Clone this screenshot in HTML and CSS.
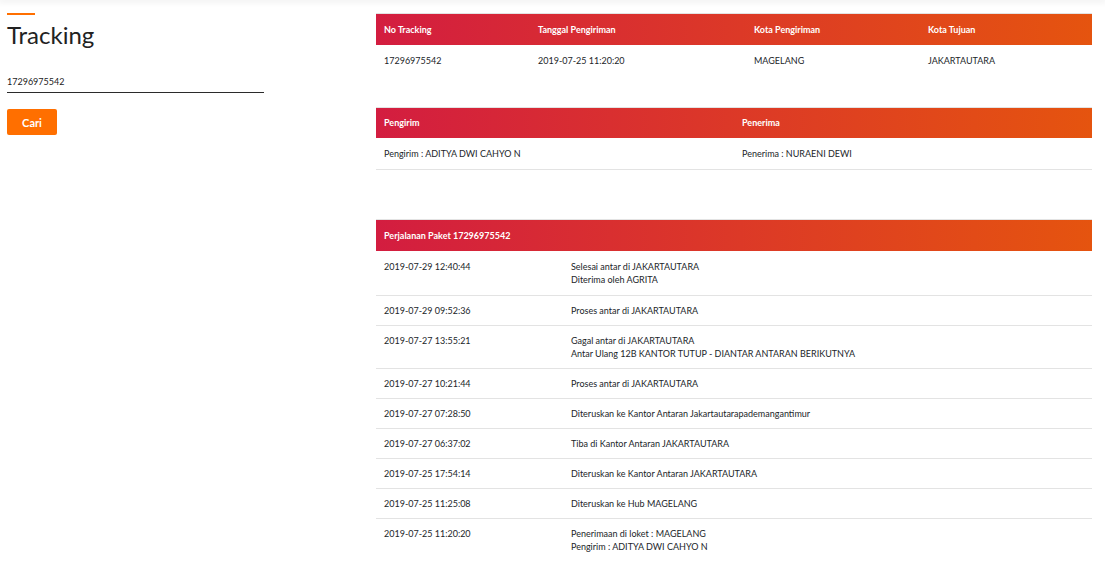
FILE: index.html
```html
<!DOCTYPE html>
<html lang="id">
<head>
    <meta charset="UTF-8">
    <meta name="viewport" content="width=device-width, initial-scale=1.0">
    <title>Tracking</title>
    <link rel="stylesheet" href="styles.css">
</head>
<body>
    <div class="topbar"></div>
    <div class="page">
        <div class="search">
            <div class="accent"></div>
            <h1>Tracking</h1>
            <input type="text" class="track-input" value="17296975542">
            <button class="search-btn">Cari</button>
        </div>

        <div class="result">
            <table class="info-table">
                <thead>
                    <tr>
                        <th>No Tracking</th>
                        <th>Tanggal Pengiriman</th>
                        <th>Kota Pengiriman</th>
                        <th>Kota Tujuan</th>
                    </tr>
                </thead>
                <tbody>
                    <tr class="no-line">
                        <td class="c1">17296975542</td>
                        <td class="c2">2019-07-25 11:20:20</td>
                        <td class="c3">MAGELANG</td>
                        <td>JAKARTAUTARA</td>
                    </tr>
                </tbody>
            </table>

            <table class="info-table party">
                <thead>
                    <tr>
                        <th>Pengirim</th>
                        <th>Penerima</th>
                    </tr>
                </thead>
                <tbody>
                    <tr>
                        <td>Pengirim : ADITYA DWI CAHYO N</td>
                        <td>Penerima : NURAENI DEWI</td>
                    </tr>
                </tbody>
            </table>

            <table class="info-table history">
                <thead>
                    <tr>
                        <th colspan="2">Perjalanan Paket 17296975542</th>
                    </tr>
                </thead>
                <tbody>
                    <tr><td class="date">2019-07-29 12:40:44</td><td>Selesai antar di JAKARTAUTARA<br>Diterima oleh AGRITA</td></tr>
                    <tr><td class="date">2019-07-29 09:52:36</td><td>Proses antar di JAKARTAUTARA</td></tr>
                    <tr><td class="date">2019-07-27 13:55:21</td><td>Gagal antar di JAKARTAUTARA<br>Antar Ulang 12B KANTOR TUTUP - DIANTAR ANTARAN BERIKUTNYA</td></tr>
                    <tr><td class="date">2019-07-27 10:21:44</td><td>Proses antar di JAKARTAUTARA</td></tr>
                    <tr><td class="date">2019-07-27 07:28:50</td><td>Diteruskan ke Kantor Antaran Jakartautarapademangantimur</td></tr>
                    <tr><td class="date">2019-07-27 06:37:02</td><td>Tiba di Kantor Antaran JAKARTAUTARA</td></tr>
                    <tr><td class="date">2019-07-25 17:54:14</td><td>Diteruskan ke Kantor Antaran JAKARTAUTARA</td></tr>
                    <tr><td class="date">2019-07-25 11:25:08</td><td>Diteruskan ke Hub MAGELANG</td></tr>
                    <tr class="no-line"><td class="date">2019-07-25 11:20:20</td><td>Penerimaan di loket : MAGELANG<br>Pengirim : ADITYA DWI CAHYO N</td></tr>
                </tbody>
            </table>
        </div>
    </div>
</body>
</html>
```

FILE: styles.css
```css
* {
    margin: 0;
    padding: 0;
    box-sizing: border-box;
}

body {
    font-family: Lato, "Open Sans", sans-serif;
    color: #212529;
    background: #fff;
    font-size: 9px;
}

.topbar {
    height: 0;
    box-shadow: 0 0 6px 2px rgba(0, 0, 0, 0.08);
}

.page {
    display: flex;
    padding: 13px 13px 0 7px;
    gap: 112px;
}

.search {
    width: 257px;
    flex-shrink: 0;
}

.accent {
    width: 28px;
    height: 2px;
    background: #ff6f00;
}

.search h1 {
    font-size: 24px;
    font-weight: 400;
    line-height: 30px;
    margin-top: 5px;
    color: #222;
}

.track-input {
    display: block;
    width: 100%;
    margin-top: 22px;
    padding: 4px 0 5px;
    border: none;
    border-bottom: 1px solid #2b2b2b;
    font-family: inherit;
    font-size: 9px;
    color: #222;
    outline: none;
}

.search-btn {
    margin-top: 16px;
    width: 50px;
    height: 26px;
    background: #ff6f00;
    color: white;
    border: none;
    border-radius: 2px;
    font-family: inherit;
    font-size: 11px;
    font-weight: 700;
    cursor: pointer;
}

.result {
    flex: 1;
}

.info-table {
    width: 100%;
    border-collapse: collapse;
    border-top: 1px solid #e3e3e3;
    margin-bottom: 31px;
}

.info-table thead tr {
    background: linear-gradient(90deg, #d31d40, #e5540f);
}

.info-table th {
    color: white;
    font-weight: 700;
    text-align: left;
    height: 31px;
    padding: 0 8px;
}

.info-table td {
    padding: 8px 8px;
    line-height: 13px;
    border-bottom: 1px solid #e3e3e3;
    vertical-align: top;
}

.info-table tr.no-line td {
    border-bottom: none;
}

.info-table .c1 { width: 154px; }
.info-table .c2 { width: 216px; }
.info-table .c3 { width: 174px; }

.info-table tbody tr:first-child td {
    padding-top: 9px;
    padding-bottom: 9px;
}

.party {
    margin-bottom: 49px;
}

.party th,
.party td {
    width: 50%;
}

.history .date {
    width: 187px;
}
```
